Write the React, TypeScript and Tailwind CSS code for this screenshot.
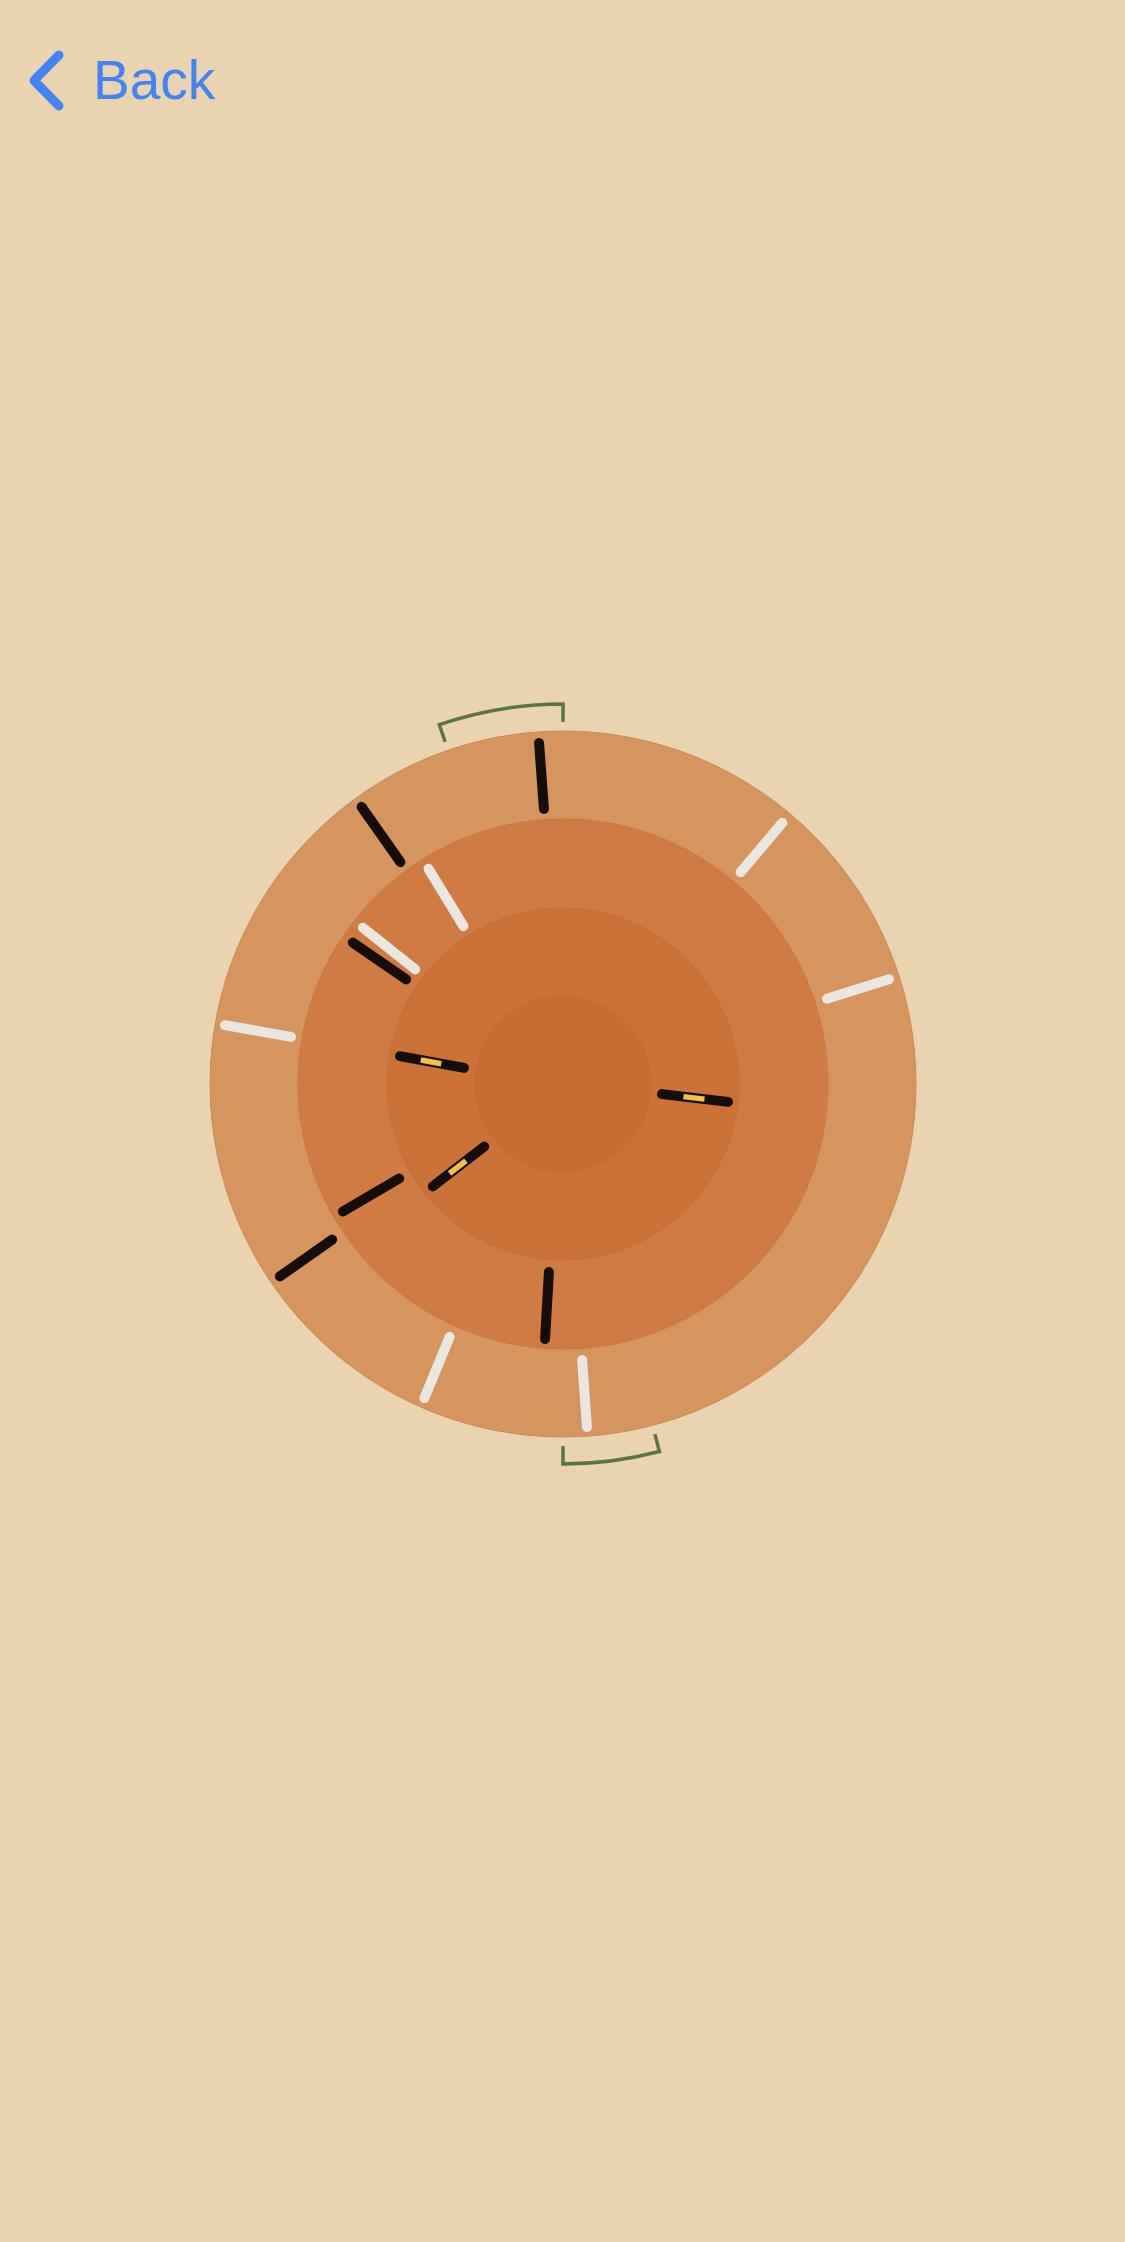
import React from "react";

type Seg = [number, number, number, number];

// Stick endpoints in disc coordinates (disc centre at 400,400)
const darkSticks: Seg[] = [
  [376, 58, 381, 126],
  [198, 122, 238, 179],
  [189, 258, 244, 296],
  [116, 593, 170, 555],
  [179, 528, 237, 494],
  [386, 587, 382, 656],
];

const markedSticks: Seg[] = [
  [236, 372, 302, 384],
  [498, 410, 566, 418],
  [269, 503, 322, 462],
];

const lightSticks: Seg[] = [
  [620, 138, 577, 189],
  [265, 184, 301, 243],
  [199, 243, 253, 286],
  [727, 295, 663, 315],
  [61, 341, 129, 353],
  [287, 652, 261, 715],
  [419, 675, 424, 744],
];

const trim = ([x1, y1, x2, y2]: Seg, d: number): Seg => {
  const len = Math.hypot(x2 - x1, y2 - y1);
  const ux = (x2 - x1) / len;
  const uy = (y2 - y1) / len;
  return [x1 + ux * d, y1 + uy * d, x2 - ux * d, y2 - uy * d];
};

const part = ([x1, y1, x2, y2]: Seg, a: number, b: number): Seg => [
  x1 + (x2 - x1) * a,
  y1 + (y2 - y1) * a,
  x1 + (x2 - x1) * b,
  y1 + (y2 - y1) * b,
];

const polar = (r: number, deg: number) => {
  const t = (deg * Math.PI) / 180;
  return [400 + r * Math.sin(t), 400 - r * Math.cos(t)];
};

const bracket = (from: number, to: number, sweep: 0 | 1) => {
  const [ax, ay] = polar(362, from);
  const [bx, by] = polar(380, from);
  const [cx, cy] = polar(380, to);
  const [dx, dy] = polar(362, to);
  return `M ${ax} ${ay} L ${bx} ${by} A 380 380 0 0 ${sweep} ${cx} ${cy} L ${dx} ${dy}`;
};

const Stick = ({ seg, color }: { seg: Seg; color: string }) => {
  const [x1, y1, x2, y2] = trim(seg, 1);
  return <line x1={x1} y1={y1} x2={x2} y2={y2} stroke={color} strokeWidth={10} strokeLinecap="round" />;
};

const Disc = () => (
  <svg width={800} height={800} viewBox="0 0 800 800">
    <circle cx={400} cy={400} r={353} fill="#d6955f" stroke="#c98a58" strokeWidth={1} />
    <circle cx={400} cy={400} r={265} fill="#cf7b43" stroke="#c67a48" strokeWidth={1} />
    <circle cx={400} cy={400} r={176} fill="#cc7239" stroke="#c4703e" strokeWidth={1} />
    <circle cx={400} cy={400} r={88} fill="#c96c34" stroke="#c26b38" strokeWidth={1} />

    <path d={bracket(-19, 0, 1)} fill="none" stroke="#5b7541" strokeWidth={3.5} />
    <path d={bracket(180, 165.3, 0)} fill="none" stroke="#5b7541" strokeWidth={3.5} />

    {lightSticks.map((s, i) => (
      <Stick key={`l${i}`} seg={s} color="#e9e7df" />
    ))}
    {darkSticks.map((s, i) => (
      <Stick key={`d${i}`} seg={s} color="#150d0b" />
    ))}
    {markedSticks.map((s, i) => {
      const [x1, y1, x2, y2] = part(s, 0.33, 0.64);
      return (
        <g key={`m${i}`}>
          <Stick seg={s} color="#150d0b" />
          <line x1={x1} y1={y1} x2={x2} y2={y2} stroke="#f4c23f" strokeWidth={5.5} />
        </g>
      );
    })}
  </svg>
);

const App = () => {
  return (
    <div className="w-[1125px] h-[2242px] bg-[#ead3b0] overflow-hidden" style={{ fontFamily: '"Liberation Sans", Arial, sans-serif' }}>
      <div className="flex items-start pt-[49px] pl-[26px]">
        <button className="flex items-start text-[#4384f2]">
          <svg width={40} height={64} viewBox="0 0 40 64">
            <path d="M33 6 L8 31.5 L33 57" fill="none" stroke="#4384f2" strokeWidth={9} strokeLinecap="round" strokeLinejoin="round" />
          </svg>
          <span className="ml-[27px] mt-[4px] text-[55px] leading-none">Back</span>
        </button>
      </div>
      <div className="flex justify-center pt-[571px]">
        <Disc />
      </div>
    </div>
  );
};

export default App;
